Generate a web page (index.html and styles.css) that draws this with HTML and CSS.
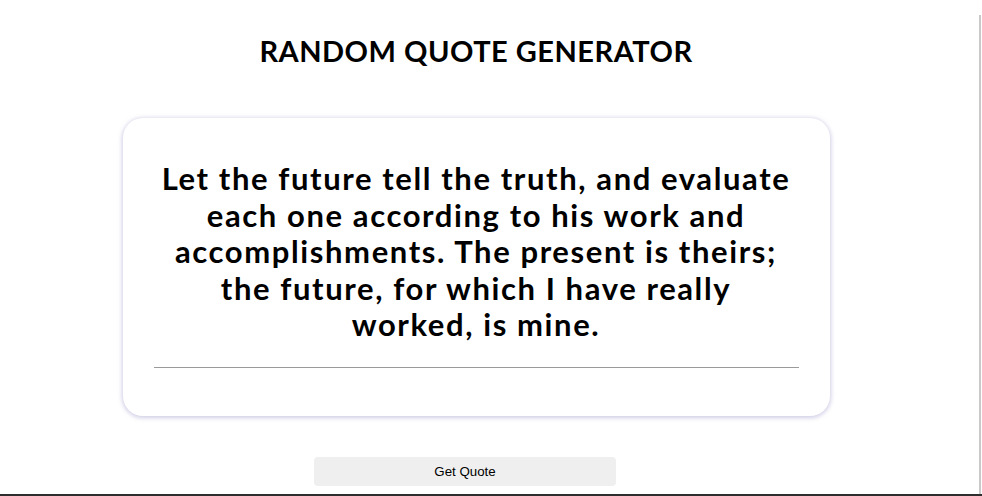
FILE: index.html
```html
<!DOCTYPE html>
<html lang="en">
<head>
<meta charset="utf-8">
<title>Random Quote Generator</title>
<link rel="stylesheet" href="styles.css">
</head>
<body>
<div class="frame">
  <main class="app">
    <h1 class="title">RANDOM QUOTE GENERATOR</h1>
    <section class="card">
      <p class="quote">Let the future tell the truth, and evaluate each one according to his work and accomplishments. The present is theirs; the future, for which I have really worked, is mine.</p>
      <hr class="rule">
      <p class="author"></p>
    </section>
    <div class="actions">
      <button class="btn" type="button">Get Quote</button>
    </div>
  </main>
  <div class="edge"></div>
</div>
<div class="bottom-bar"></div>
</body>
</html>
```
FILE: styles.css
```css
html, body {
  margin: 0;
  padding: 0;
  background: #ffffff;
}
body {
  width: 982px;
  height: 496px;
  overflow: hidden;
  display: flex;
  flex-direction: column;
  font-family: Lato, "Open Sans", sans-serif;
  color: #000;
}
.frame {
  flex: 1;
  display: flex;
  min-height: 0;
}
.app {
  width: 952px;
  display: flex;
  flex-direction: column;
  align-items: center;
}
.edge {
  width: 2px;
  margin-left: 27px;
  margin-top: 15px;
  background: #c9c9c9;
}
.title {
  margin: 34px 0 0 0;
  font-size: 29px;
  line-height: 34px;
  font-weight: 700;
  letter-spacing: 0.5px;
}
.card {
  box-sizing: border-box;
  width: 707px;
  height: 298px;
  margin-top: 50px;
  padding: 42px 31px 0 31px;
  border-radius: 20px;
  background: #fff;
  box-shadow: 0 1px 4px 1px rgba(170, 165, 210, 0.55);
}
.quote {
  margin: 0;
  padding: 0 5px;
  text-align: center;
  font-size: 31px;
  line-height: 36.6px;
  font-weight: 700;
  letter-spacing: 1.6px;
}
.rule {
  margin: 24px 0 0 0;
  border: 0;
  height: 1px;
  background: #9a9a9a;
}
.author {
  margin: 0;
}
.actions {
  margin-top: 41px;
  width: 952px;
  display: flex;
  justify-content: center;
  padding-right: 22px;
  box-sizing: border-box;
}
.btn {
  width: 302px;
  height: 29px;
  border: 0;
  border-radius: 4px;
  background: #efefef;
  font-family: "Liberation Sans", Arial, sans-serif;
  font-size: 13.3px;
  color: #000;
}
.bottom-bar {
  height: 2px;
  background: #2e2e2e;
}
```
